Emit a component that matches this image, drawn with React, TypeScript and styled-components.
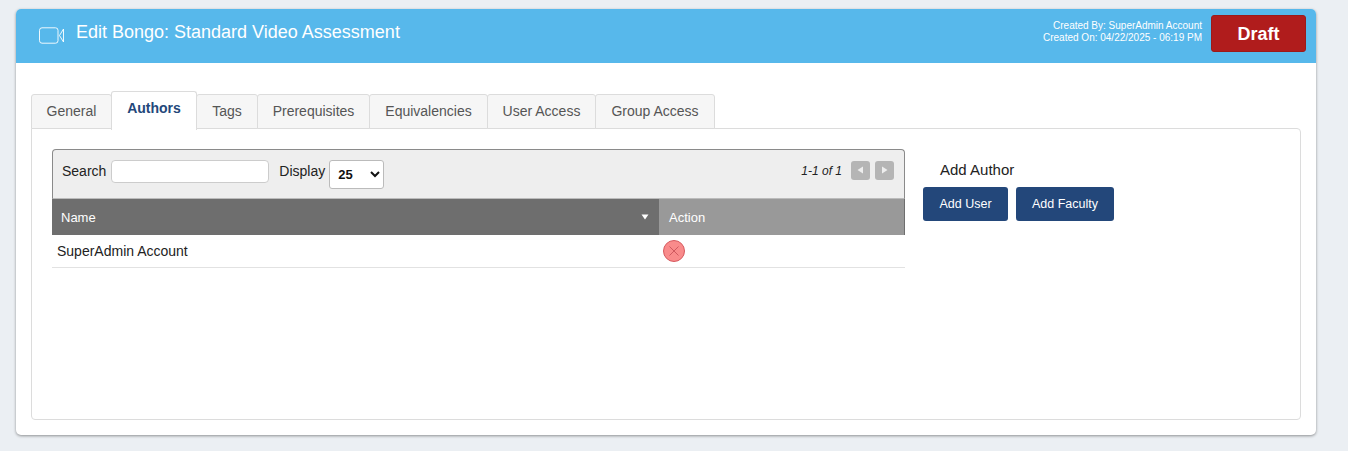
import React from "react";
import styled, { createGlobalStyle } from "styled-components";

const Global = createGlobalStyle`
  html, body { margin: 0; padding: 0; background: #ebeff3; }
  body { font-family: "Liberation Sans", Arial, sans-serif; color: #222; }
  * { box-sizing: border-box; }
`;

const Page = styled.div`
  width: 1348px;
  height: 451px;
  padding: 9px 32px 16px 16px;
  overflow: hidden;
`;

const Card = styled.main`
  height: 426px;
  background: #fff;
  border-radius: 5px;
  box-shadow: 0 1px 3px rgba(0, 0, 0, 0.4);
  overflow: hidden;
`;

const Header = styled.header`
  height: 54px;
  background: #57b8eb;
  display: flex;
  align-items: flex-start;
  color: #fff;
  padding: 6px 10px 0 23px;
`;

const VideoIcon = styled.svg`
  width: 26px;
  height: 18px;
  margin-top: 12px;
  flex: none;
`;

const Title = styled.h1`
  margin: 7px 0 0 11px;
  font-size: 18px;
  line-height: 20px;
  font-weight: 400;
  flex: 1;
`;

const Meta = styled.div`
  font-size: 10px;
  line-height: 12px;
  text-align: right;
  margin: 5px 9px 0 0;
`;

const DraftBadge = styled.div`
  width: 95px;
  height: 37px;
  background: #b01c1c;
  border: 1px solid #9c1a1a;
  border-radius: 3px;
  font-size: 18px;
  font-weight: 700;
  display: flex;
  align-items: center;
  justify-content: center;
  padding-top: 1px;
`;

const Body = styled.div`
  padding: 28px 15px 15px;
`;

const Tabs = styled.nav`
  display: flex;
  align-items: flex-end;
  height: 38px;
  position: relative;
  z-index: 1;
`;

const Tab = styled.div<{ $width: number; $active?: boolean }>`
  width: ${(p) => p.$width}px;
  height: ${(p) => (p.$active ? 39 : 35)}px;
  margin-left: -1px;
  margin-bottom: ${(p) => (p.$active ? -1 : 0)}px;
  background: ${(p) => (p.$active ? "#fff" : "#f6f6f6")};
  border: 1px solid #dcdcdc;
  border-bottom: ${(p) => (p.$active ? "none" : "1px solid #dcdcdc")};
  border-radius: 3px 3px 0 0;
  color: ${(p) => (p.$active ? "#23477a" : "#555")};
  font-size: 14px;
  font-weight: ${(p) => (p.$active ? 700 : 400)};
  text-align: center;
  line-height: ${(p) => (p.$active ? 32 : 33)}px;
  &:first-child { margin-left: 0; }
`;

const Panel = styled.section`
  height: 292px;
  margin-top: -1px;
  border: 1px solid #dcdcdc;
  border-radius: 0 4px 4px 4px;
  padding: 20px 20px 0;
  display: flex;
  align-items: flex-start;
`;

const TableWrap = styled.div`
  width: 853px;
  flex: none;
`;

const Toolbar = styled.div`
  height: 50px;
  background: #eeeeee;
  border: 1px solid #8a8a8a;
  border-bottom: 1px solid #bbb;
  border-radius: 4px 4px 0 0;
  display: flex;
  align-items: flex-start;
  padding: 10px 10px 0 9px;
  font-size: 14px;
`;

const Label = styled.label`
  line-height: 22px;
`;

const SearchInput = styled.div`
  width: 158px;
  height: 23px;
  margin: 0 10px 0 5px;
  background: #fff;
  border: 1px solid #ccc;
  border-radius: 4px;
`;

const DisplaySelect = styled.select`
  width: 55px;
  height: 29px;
  margin-left: 4px;
  background: #fff;
  border: 1px solid #bbb;
  border-radius: 3px;
  font: 700 13px "Liberation Sans", Arial, sans-serif;
  color: #111;
  padding-left: 4px;
`;

const Pager = styled.div`
  margin-left: auto;
  display: flex;
  align-items: center;
  height: 20px;
  font-size: 12px;
  font-style: italic;
  color: #222;
`;

const PagerText = styled.span`
  padding-top: 2px;
`;

const PagerButton = styled.div`
  width: 19px;
  height: 19px;
  margin-left: 5px;
  background: #b5b5b5;
  border-radius: 3px;
  display: flex;
  align-items: center;
  justify-content: center;
  &:first-of-type { margin-left: 9px; }
`;

const HeadRow = styled.div`
  display: grid;
  grid-template-columns: 607px 246px;
  height: 36px;
  color: #fff;
  font-size: 13px;
`;

const NameHead = styled.div`
  background: #6e6e6e;
  display: flex;
  align-items: center;
  justify-content: space-between;
  padding: 0 10px 0 9px;
`;

const ActionHead = styled.div`
  background: #999999;
  border-right: 1px solid #6e6e6e;
  display: flex;
  align-items: center;
  padding: 0 0 0 10px;
`;

const DataRow = styled.div`
  display: grid;
  grid-template-columns: 607px 246px;
  height: 33px;
  border-bottom: 1px solid #e2e2e2;
  font-size: 14px;
  align-items: center;
`;

const NameCell = styled.div`
  padding-left: 5px;
`;

const ActionCell = styled.div`
  padding-left: 4px;
  display: flex;
`;

const Side = styled.aside`
  margin-left: 18px;
`;

const SideTitle = styled.div`
  font-size: 15px;
  line-height: 18px;
  margin: 12px 0 0 17px;
`;

const SideButtons = styled.div`
  display: flex;
  gap: 8px;
  margin-top: 8px;
`;

const PrimaryButton = styled.button<{ $width: number }>`
  width: ${(p) => p.$width}px;
  height: 34px;
  background: #23477a;
  color: #fff;
  border: none;
  border-radius: 3px;
  font: 400 12.5px "Liberation Sans", Arial, sans-serif;
  padding: 0;
`;

const tabs: [string, number][] = [
  ["General", 81],
  ["Authors", 86],
  ["Tags", 62],
  ["Prerequisites", 113],
  ["Equivalencies", 119],
  ["User Access", 109],
  ["Group Access", 120],
];

export default function App() {
  return (
    <Page>
      <Global />
      <Card>
        <Header>
          <VideoIcon viewBox="0 0 26 18" fill="none" stroke="#fff" strokeWidth="0.9">
            <rect x="0.5" y="0.8" width="18.5" height="15.4" rx="2.5" />
            <path d="M24.5 2 L20.5 8.5 L24.5 15 Z" />
          </VideoIcon>
          <Title>Edit Bongo: Standard Video Assessment</Title>
          <Meta>
            Created By: SuperAdmin Account
            <br />
            Created On: 04/22/2025 - 06:19 PM
          </Meta>
          <DraftBadge>Draft</DraftBadge>
        </Header>
        <Body>
          <Tabs>
            {tabs.map(([label, width]) => (
              <Tab key={label} $width={width} $active={label === "Authors"}>
                {label}
              </Tab>
            ))}
          </Tabs>
          <Panel>
            <TableWrap>
              <Toolbar>
                <Label>Search</Label>
                <SearchInput />
                <Label>Display</Label>
                <DisplaySelect defaultValue="25">
                  <option>25</option>
                  <option>50</option>
                  <option>100</option>
                </DisplaySelect>
                <Pager>
                  <PagerText>1-1 of 1</PagerText>
                  <PagerButton>
                    <svg width="7" height="8" viewBox="0 0 7 8"><path d="M6 0.5V7.5L0.5 4Z" fill="#eee" /></svg>
                  </PagerButton>
                  <PagerButton>
                    <svg width="7" height="8" viewBox="0 0 7 8"><path d="M1 0.5V7.5L6.5 4Z" fill="#eee" /></svg>
                  </PagerButton>
                </Pager>
              </Toolbar>
              <HeadRow>
                <NameHead>
                  Name
                  <svg width="8" height="6" viewBox="0 0 8 6"><path d="M0.5 0.5H7.5L4 5.5Z" fill="#fff" /></svg>
                </NameHead>
                <ActionHead>Action</ActionHead>
              </HeadRow>
              <DataRow>
                <NameCell>SuperAdmin Account</NameCell>
                <ActionCell>
                  <svg width="22" height="22" viewBox="0 0 22 22">
                    <circle cx="11" cy="11" r="10.5" fill="#f98b8b" stroke="#d65a5f" />
                    <path d="M6.5 6.5L15.5 15.5M15.5 6.5L6.5 15.5" stroke="#c9535a" strokeWidth="0.9" />
                  </svg>
                </ActionCell>
              </DataRow>
            </TableWrap>
            <Side>
              <SideTitle>Add Author</SideTitle>
              <SideButtons>
                <PrimaryButton $width={85}>Add User</PrimaryButton>
                <PrimaryButton $width={98}>Add Faculty</PrimaryButton>
              </SideButtons>
            </Side>
          </Panel>
        </Body>
      </Card>
    </Page>
  );
}
